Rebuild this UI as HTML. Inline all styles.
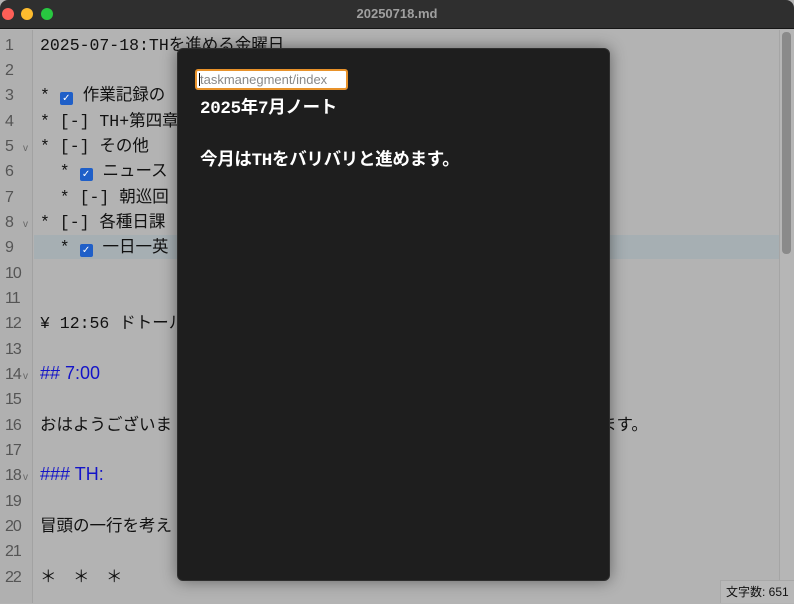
<!DOCTYPE html>
<html><head><meta charset="utf-8"><style>
*{margin:0;padding:0;box-sizing:border-box}
body{width:794px;height:603px;overflow:hidden;background:#b3b3b3;position:relative;font-family:"Liberation Mono","Noto Sans CJK JP",monospace;}
.title{position:absolute;left:0;top:0;width:794px;height:29px;background:#2f2f2f;border-bottom:1px solid #151515;border-radius:8px 8px 0 0}
.title .t{position:absolute;left:0;right:0;top:6px;text-align:center;color:#a0a0a0;font:bold 13px "Liberation Sans",sans-serif}
.dot{position:absolute;top:8px;width:12px;height:12px;border-radius:50%}
.gutter{position:absolute;left:0;top:30px;width:33px;height:573px;background:#b0b0b0;border-right:1px solid #a2a2a2}
.ln{position:absolute;left:0;width:33px;height:25px;font:16px "Liberation Sans Narrow","Liberation Sans",sans-serif;color:#555;padding-left:5px;line-height:25px;letter-spacing:-1px}
.ln .f{position:absolute;left:23px;top:2px;font-size:10px;color:#666}
.row{position:absolute;left:40px;height:25px;line-height:25px;font-size:16.5px;color:#111;white-space:pre}
.h{font-family:"Liberation Sans","Noto Sans CJK JP",sans-serif;color:#1414c8;font-size:18px}
.cb{display:inline-block;width:13px;height:13px;background:#1f5fc8;border-radius:2px;vertical-align:-1px;color:#fff;font-size:10px;line-height:13px;text-align:center;font-family:"DejaVu Sans",sans-serif}
.hl{position:absolute;left:34px;top:235px;width:745px;height:24px;background:#a6afb3}
.sb{position:absolute;left:779px;top:30px;width:15px;height:573px;background:#b6b6b6;border-left:1px solid #a5a5a5}
.thumb{position:absolute;left:782px;top:32px;width:9px;height:222px;background:#8a8a8a;border-radius:4px}
.cnt{position:absolute;left:720px;top:580px;width:74px;height:23px;background:#b8b8b8;font-size:12px;line-height:23px;padding-left:5px;color:#111;font-family:"Liberation Sans","Noto Sans CJK JP",sans-serif;border-top:1px solid #a8a8a8;border-left:1px solid #a8a8a8}
.dlg{position:absolute;left:177px;top:48px;width:433px;height:533px;background:#1e1e1e;border-radius:6px;box-shadow:0 0 16px rgba(0,0,0,.45);border:1px solid #2e2e2e}
.inp{position:absolute;left:17px;top:20px;width:153px;height:21px;border:2px solid #e8922a;border-radius:3px;background:#fff;font:13px "Liberation Sans",sans-serif;color:#888;line-height:17px;padding-left:3px}
.inp:before{content:"";position:absolute;left:2px;top:2px;width:1px;height:13px;background:#000}
.dt{position:absolute;left:22px;color:#fff;font-size:17.5px;white-space:pre;font-family:"Liberation Mono","Noto Sans CJK JP",monospace;font-weight:bold;letter-spacing:-0.3px}
</style></head><body>
<div class="title"><span class="dot" style="left:2px;background:#fe5f57"></span><span class="dot" style="left:21px;background:#febc2e"></span><span class="dot" style="left:41px;background:#28c840"></span><div class="t">20250718.md</div></div>
<div class="gutter"></div>
<div class="hl"></div>
<div class="sb"></div><div class="thumb"></div>

<div class="ln" style="top:33px">1</div>
<div class="ln" style="top:58px">2</div>
<div class="ln" style="top:83px">3</div>
<div class="ln" style="top:109px">4</div>
<div class="ln" style="top:134px">5<span class="f">v</span></div>
<div class="ln" style="top:159px">6</div>
<div class="ln" style="top:185px">7</div>
<div class="ln" style="top:210px">8<span class="f">v</span></div>
<div class="ln" style="top:235px">9</div>
<div class="ln" style="top:261px">10</div>
<div class="ln" style="top:286px">11</div>
<div class="ln" style="top:311px">12</div>
<div class="ln" style="top:337px">13</div>
<div class="ln" style="top:362px">14<span class="f">v</span></div>
<div class="ln" style="top:387px">15</div>
<div class="ln" style="top:413px">16</div>
<div class="ln" style="top:438px">17</div>
<div class="ln" style="top:463px">18<span class="f">v</span></div>
<div class="ln" style="top:489px">19</div>
<div class="ln" style="top:514px">20</div>
<div class="ln" style="top:539px">21</div>
<div class="ln" style="top:565px">22</div>

<div class="row" style="top:33px">2025-07-18:THを進める金曜日</div>
<div class="row" style="top:83px">* <span class="cb">✓</span> 作業記録の</div>
<div class="row" style="top:109px">* [-] TH+第四章</div>
<div class="row" style="top:134px">* [-] その他</div>
<div class="row" style="top:159px">  * <span class="cb">✓</span> ニュース</div>
<div class="row" style="top:185px">  * [-] 朝巡回</div>
<div class="row" style="top:210px">* [-] 各種日課</div>
<div class="row" style="top:235px">  * <span class="cb">✓</span> 一日一英</div>
<div class="row" style="top:311px">¥ 12:56 ドトール</div>
<div class="row h" style="top:361px">## 7:00</div>
<div class="row" style="top:413px">おはようございま</div>
<div class="row" style="top:413px;left:600px">ます。</div>
<div class="row h" style="top:462px">### TH:</div>
<div class="row" style="top:514px">冒頭の一行を考え</div>
<div class="row" style="top:565px">＊　＊　＊</div>

<div class="cnt">文字数: 651</div>

<div class="dlg">
<div class="inp">taskmanegment/index</div>
<div class="dt" style="top:45px">2025年7月ノート</div>
<div class="dt" style="top:97px">今月はTHをバリバリと進めます。</div>
</div>
</body></html>
